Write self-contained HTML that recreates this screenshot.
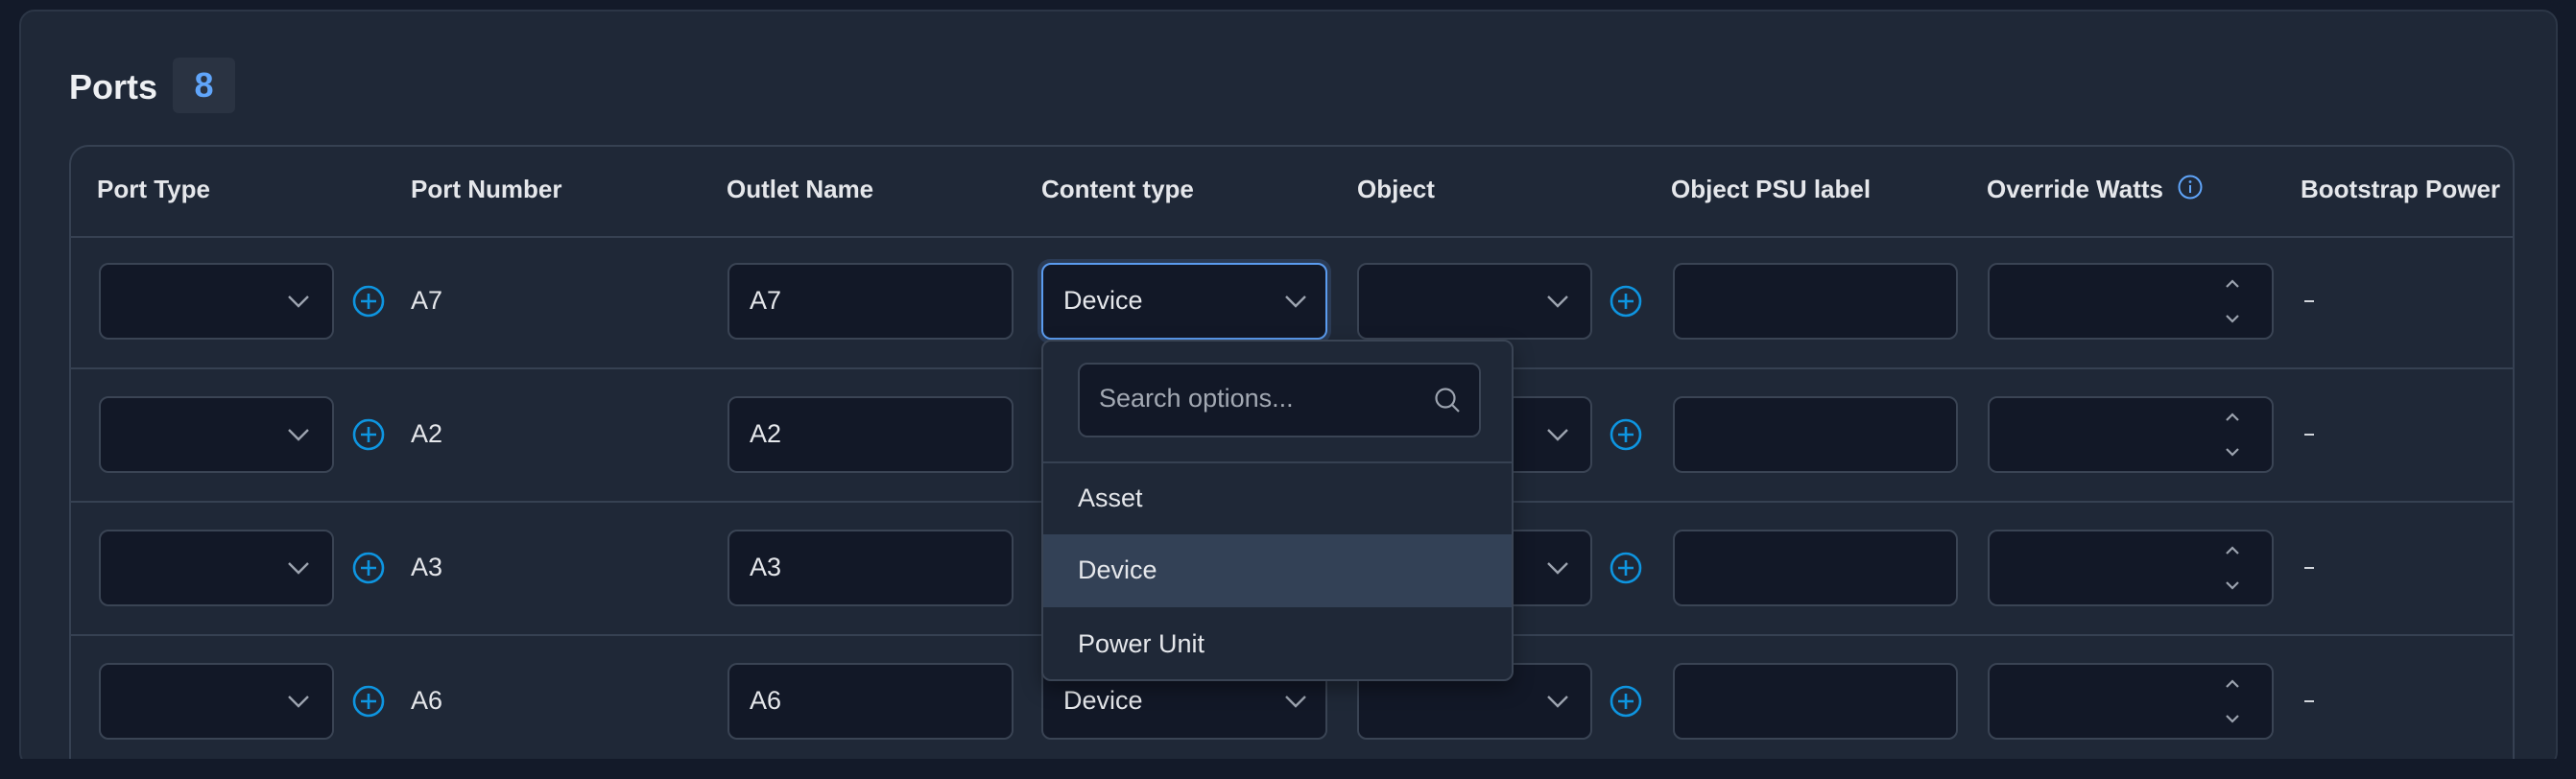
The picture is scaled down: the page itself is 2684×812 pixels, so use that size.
<!DOCTYPE html>
<html style="overflow:hidden;width:2684px;height:812px"><head><meta charset="utf-8"><style>
*{box-sizing:border-box;margin:0;padding:0}
body{width:2684px;height:812px;background:#131a29;font-family:"Liberation Sans",sans-serif;color:#e5e7eb;position:relative;overflow:hidden}
.a{position:absolute}
.panel{left:20px;top:10px;width:2645px;height:790px;background:#1f2837;border:2px solid #2c3646;border-radius:16px}
.tbl{left:72px;top:151px;width:2548px;height:660px;border:2px solid #364152;border-bottom:none;border-radius:20px 20px 0 0;background:#1f2837}
.h{top:182px;font-size:26px;font-weight:bold;color:#e5e7eb}
.line{left:74px;width:2545px;height:2px;background:#364152}
.inp{background:#121827;border:2px solid #3a4454;border-radius:10px;height:80px}
.txt{font-size:27px;color:#e5e7eb}
.plus{width:34px;height:34px}
.chev{width:24px;height:14px}
</style></head><body>
<div class="a panel"></div>
<div class="a" style="left:72px;top:70px;font-size:36px;font-weight:bold;color:#eef0f3">Ports</div>
<div class="a" style="left:180px;top:60px;width:65px;height:58px;background:#2a3342;border-radius:6px;color:#60a5fa;font-size:36px;font-weight:bold;text-align:center;line-height:58px">8</div>
<div class="a tbl"></div>
<div class="a h" style="left:101px">Port Type</div>
<div class="a h" style="left:428px">Port Number</div>
<div class="a h" style="left:757px">Outlet Name</div>
<div class="a h" style="left:1085px">Content type</div>
<div class="a h" style="left:1414px">Object</div>
<div class="a h" style="left:1741px">Object PSU label</div>
<div class="a h" style="left:2070px">Override Watts</div>
<svg class="a" style="left:2268px;top:181px" width="28" height="28" viewBox="0 0 28 28"><circle cx="14" cy="14" r="11.5" fill="none" stroke="#60a5fa" stroke-width="2"/><line x1="14" y1="12" x2="14" y2="20" stroke="#60a5fa" stroke-width="2"/><circle cx="14" cy="8.5" r="1.4" fill="#60a5fa"/></svg>
<div class="a h" style="left:2397px">Bootstrap Power</div>
<div class="a line" style="top:246px"></div>
<div class="a line" style="top:383px"></div>
<div class="a line" style="top:522px"></div>
<div class="a line" style="top:661px"></div>

<script>
const rows=[["A7",274,"A7",""],["A2",413,"A2",""],["A3",552,"A3",""],["A6",691,"A6","Device"]];
const chev='<path d="M2 2 L12 12 L22 2" fill="none" stroke="#9ca3af" stroke-width="2.4"/>';
const plus='<circle cx="17" cy="17" r="15" fill="none" stroke="#0e95e0" stroke-width="2.6"/><path d="M17 9V25M9 17H25" stroke="#0e95e0" stroke-width="2.6"/>';
let h='';
rows.forEach((r,i)=>{const y=r[1];const c=y+40;
h+=`<div class="a inp" style="left:103px;top:${y}px;width:245px"></div><svg class="a chev" style="left:299px;top:${c-7}px" viewBox="0 0 24 14">${chev}</svg>`;
h+=`<svg class="a plus" style="left:367px;top:${c-17}px" viewBox="0 0 34 34">${plus}</svg>`;
h+=`<div class="a txt" style="left:428px;top:${c-16}px">${r[0]}</div>`;
h+=`<div class="a inp" style="left:758px;top:${y}px;width:298px"></div><div class="a txt" style="left:781px;top:${c-16}px">${r[2]}</div>`;
if(i==3){h+=`<div class="a inp" style="left:1085px;top:${y}px;width:298px"></div><div class="a txt" style="left:1108px;top:${c-16}px">Device</div><svg class="a chev" style="left:1338px;top:${c-7}px" viewBox="0 0 24 14">${chev}</svg>`;}
if(i==0||i==3){h+=`<div class="a inp" style="left:1414px;top:${y}px;width:245px"></div><svg class="a chev" style="left:1611px;top:${c-7}px" viewBox="0 0 24 14">${chev}</svg>`;}
else{h+=`<div class="a inp" style="left:1500px;top:${y}px;width:159px"></div><svg class="a chev" style="left:1611px;top:${c-7}px" viewBox="0 0 24 14">${chev}</svg>`;}
h+=`<svg class="a plus" style="left:1677px;top:${c-17}px" viewBox="0 0 34 34">${plus}</svg>`;
h+=`<div class="a inp" style="left:1743px;top:${y}px;width:297px"></div>`;
h+=`<div class="a inp" style="left:2071px;top:${y}px;width:298px"></div><svg class="a" style="left:2317px;top:${c-25}px" width="18" height="50" viewBox="0 0 18 50"><path d="M3 10 L9 4 L15 10M3 40 L9 46 L15 40" fill="none" stroke="#9ca3af" stroke-width="2.2"/></svg>`;
h+=`<div class="a" style="left:2401px;top:${c-1}px;width:10px;height:2px;background:#d1d5db"></div>`;
});
document.write(h);
</script>
<div class="a" style="left:1081px;top:270px;width:306px;height:88px;border-radius:13px;background:#2b3b55"></div>
<div class="a inp" style="left:1085px;top:274px;width:298px;background:#121827;border:2px solid #5b9cf0"></div>
<div class="a txt" style="left:1108px;top:298px">Device</div>
<svg class="a chev" style="left:1338px;top:307px" viewBox="0 0 24 14"><path d="M2 2 L12 12 L22 2" fill="none" stroke="#9ca3af" stroke-width="2.4"/></svg>
<div class="a" style="left:1085px;top:354px;width:492px;height:356px;background:#1f2837;border:2px solid #3a4454;border-radius:10px;overflow:hidden;box-shadow:0 8px 20px rgba(0,0,0,.35)">
 <div class="a inp" style="left:36px;top:22px;width:420px;height:78px"></div>
 <div class="a" style="left:58px;top:44px;font-size:27px;color:#a3a9b3">Search options...</div>
 <svg class="a" style="left:406px;top:46px" width="30" height="30" viewBox="0 0 30 30"><circle cx="13" cy="13" r="9.5" fill="none" stroke="#9ca3af" stroke-width="2.2"/><path d="M20 20 L27 27" stroke="#9ca3af" stroke-width="2.2"/></svg>
 <div class="a" style="left:0;top:125px;width:492px;height:2px;background:#364152"></div>
 <div class="a txt" style="left:36px;top:148px">Asset</div>
 <div class="a" style="left:0;top:201px;width:492px;height:76px;background:#334156"></div>
 <div class="a txt" style="left:36px;top:223px">Device</div>
 <div class="a txt" style="left:36px;top:300px">Power Unit</div>
</div>
<div class="a" style="left:0;top:791px;width:2684px;height:21px;background:#131a29"></div>
</body></html>
